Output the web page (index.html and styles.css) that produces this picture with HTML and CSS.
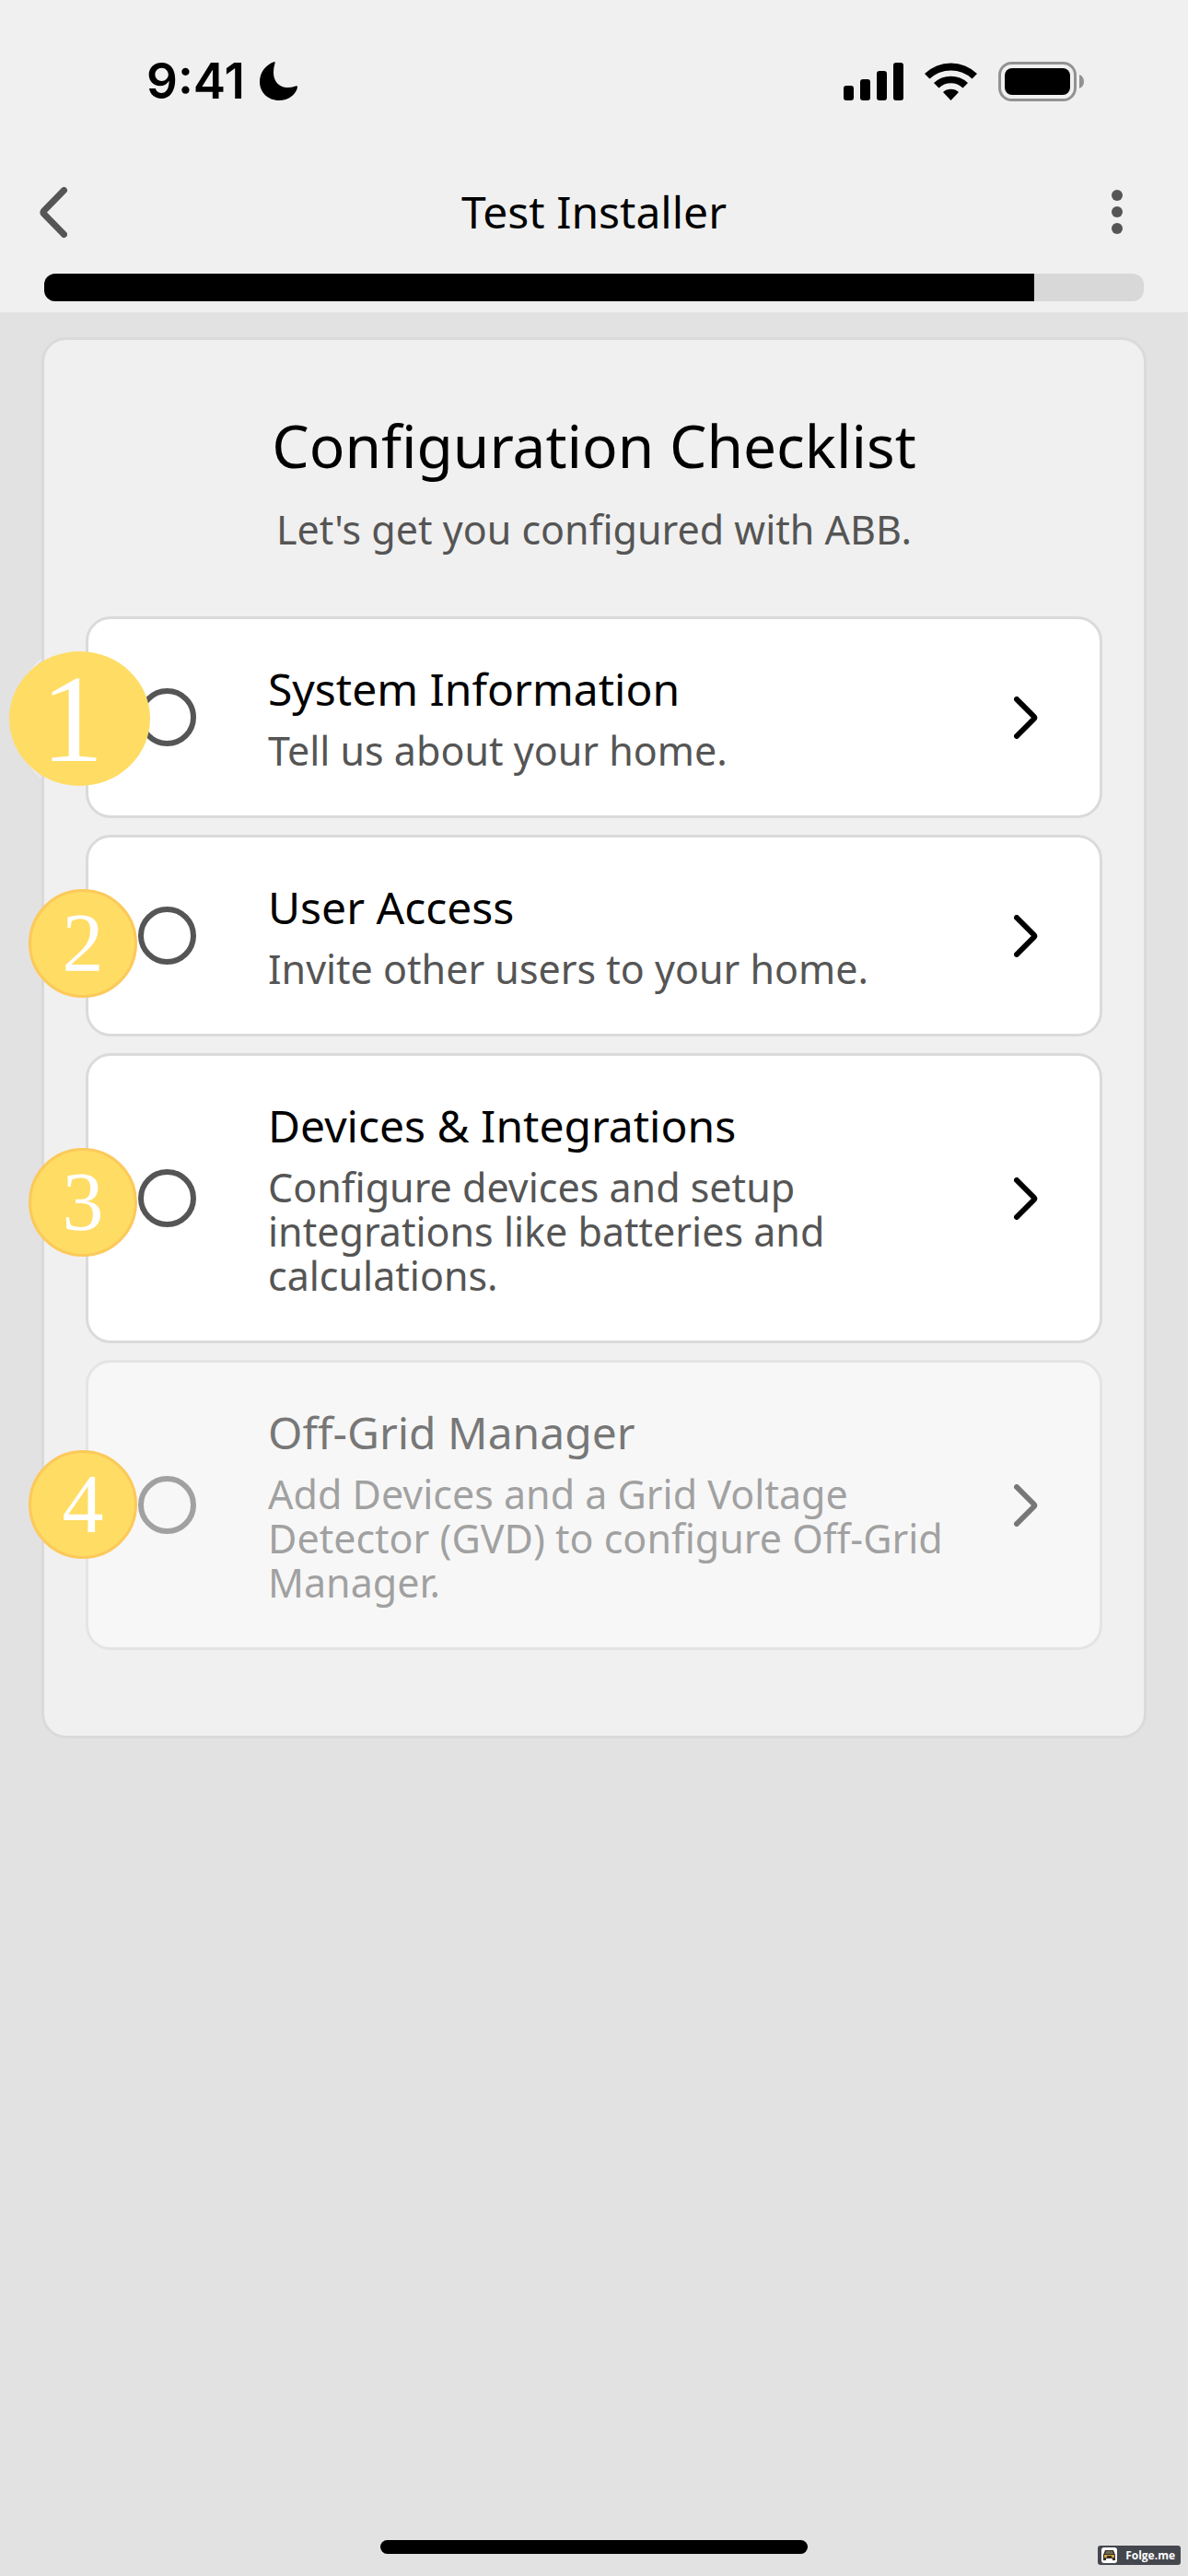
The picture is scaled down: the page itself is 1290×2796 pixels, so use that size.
FILE: index.html
```html
<!DOCTYPE html>
<html lang="en">
<head>
    <meta charset="UTF-8">
    <meta name="viewport" content="width=device-width, initial-scale=1.0">
    <title>Test Installer</title>
    <link rel="stylesheet" href="styles.css">
</head>
<body>
    <header class="header">
        <div class="status-bar">
            <div class="status-left">
                <span class="time">9:41</span>
                <svg width="41" height="42" viewBox="0 0 41 42"><path d="M16 0C7 3 0 11 0 22c0 11 9 20 21 20 10 0 18-6 20-14 0-2-1-2-2-1.500-3 1-6 1.500-9 1.500-9 0-15-7-15-16 0-4 .5-7 1.500-10Q17 0 16 0z"/></svg>
            </div>
            <div class="status-right">
                <svg width="65" height="41" viewBox="0 0 65 41">
                    <rect x="0" y="25" width="11" height="16" rx="3"/>
                    <rect x="18" y="18" width="11" height="23" rx="3"/>
                    <rect x="36" y="9" width="11" height="32" rx="3"/>
                    <rect x="54" y="0" width="11" height="41" rx="3"/>
                </svg>
                <svg width="57" height="42" viewBox="0 0 57 42">
                    <path d="M0 13a41 41 0 0 1 57 0l-5.500 5.500a34 34 0 0 0-46 0z"/>
                    <path d="M10 23a27 27 0 0 1 37 0l-5.500 5.500a19 19 0 0 0-26 0z"/>
                    <path d="M20 33a13 13 0 0 1 17 0l-8.500 9z"/>
                </svg>
                <svg width="93" height="43" viewBox="0 0 93 43">
                    <rect x="1.500" y="1.500" width="82" height="40" rx="13" fill="none" stroke="#929292" stroke-width="3"/>
                    <rect x="7" y="7" width="71" height="29" rx="8"/>
                    <path d="M88 14q5 2 5 7.500t-5 7.500z" fill="#929292"/>
                </svg>
            </div>
        </div>
        <nav class="navbar">
            <button class="icon-btn" aria-label="Back">
                <svg width="30" height="55" viewBox="0 0 30 55"><path d="M26.500 3.500L5 25.500q-2 2 0 4L26.500 51.500" fill="none" stroke="#555" stroke-width="7" stroke-linecap="round"/></svg>
            </button>
            <h1 class="nav-title">Test Installer</h1>
            <button class="icon-btn menu-btn" aria-label="More options">
                <svg width="12" height="48" viewBox="0 0 12 48" fill="#555"><circle cx="6" cy="6" r="6"/><circle cx="6" cy="24" r="6"/><circle cx="6" cy="42" r="6"/></svg>
            </button>
        </nav>
        <div class="progress" role="progressbar" aria-label="Setup progress" aria-valuenow="90" aria-valuemin="0" aria-valuemax="100">
            <div class="progress-fill" style="width: 90%"></div>
        </div>
    </header>

    <main class="card">
        <h2 class="card-title">Configuration Checklist</h2>
        <p class="card-text">Let's get you configured with ABB.</p>
        <ul class="checklist">
            <li>
                <button class="item">
                    <span class="circle"></span>
                    <span class="item-body">
                        <span class="item-title">System Information</span>
                        <span class="item-text">Tell us about your home.</span>
                    </span>
                    <svg class="chevron" width="26" height="46" viewBox="0 0 26 46"><path d="M3 3L21.500 21.500q1.500 1.500 0 3L3 43"/></svg>
                </button>
                <span class="marker marker-1">1</span>
            </li>
            <li>
                <button class="item">
                    <span class="circle"></span>
                    <span class="item-body">
                        <span class="item-title">User Access</span>
                        <span class="item-text">Invite other users to your home.</span>
                    </span>
                    <svg class="chevron" width="26" height="46" viewBox="0 0 26 46"><path d="M3 3L21.500 21.500q1.500 1.500 0 3L3 43"/></svg>
                </button>
                <span class="marker marker-2">2</span>
            </li>
            <li>
                <button class="item">
                    <span class="circle"></span>
                    <span class="item-body">
                        <span class="item-title">Devices &amp; Integrations</span>
                        <span class="item-text">Configure devices and setup integrations like batteries and calculations.</span>
                    </span>
                    <svg class="chevron" width="26" height="46" viewBox="0 0 26 46"><path d="M3 3L21.500 21.500q1.500 1.500 0 3L3 43"/></svg>
                </button>
                <span class="marker marker-3">3</span>
            </li>
            <li>
                <button class="item" disabled>
                    <span class="circle"></span>
                    <span class="item-body">
                        <span class="item-title">Off-Grid Manager</span>
                        <span class="item-text">Add Devices and a Grid Voltage Detector (GVD) to configure Off-Grid Manager.</span>
                    </span>
                    <svg class="chevron" width="26" height="46" viewBox="0 0 26 46"><path d="M3 3L21.500 21.500q1.500 1.500 0 3L3 43"/></svg>
                </button>
                <span class="marker marker-4">4</span>
            </li>
        </ul>
    </main>

    <footer class="footer">
        <div class="home-bar"></div>
        <div class="folge">
            <svg width="17" height="17" viewBox="0 0 17 17">
                <rect width="17" height="17" rx="3" fill="#fff"/>
                <path d="M4 3h9l2 5v6h-3v-2H5v2H2V8z" fill="#3b3122"/>
                <path d="M3 8h11v3H3z" fill="#c9a345"/>
                <path d="M5 4h7l1 3H4z" fill="#6d6758"/>
                <path d="M6 9h5v2H6z" fill="#3b3122"/>
            </svg>
            <span>Folge.me</span>
        </div>
    </footer>
</body>
</html>
```
FILE: styles.css
```css
* {
    box-sizing: border-box;
}
body {
    margin: 0;
    min-height: 100vh;
    display: flex;
    flex-direction: column;
    background-color: #e2e2e2;
    color: #000;
    font-family: "Noto Sans", sans-serif;
}
h1, h2, p, ul {
    margin: 0;
    padding: 0;
    font-weight: 400;
}
svg {
    display: block;
    flex-shrink: 0;
}
button {
    border: none;
    background: none;
    padding: 0;
    color: inherit;
    font-family: inherit;
    cursor: pointer;
}

/* header */
.header {
    background-color: #f0f0f0;
    padding: 58px 48px 12px;
}
.status-bar {
    display: flex;
    justify-content: space-between;
    align-items: center;
    height: 60px;
    padding: 0 65px 0 111px;
}
.status-left {
    display: flex;
    align-items: center;
    gap: 16px;
}
.status-right {
    display: flex;
    align-items: center;
    gap: 23px;
}
.time {
    font-family: Inter, sans-serif;
    font-size: 53px;
    font-weight: 600;
    line-height: 60px;
}
.navbar {
    display: flex;
    justify-content: space-between;
    align-items: center;
    height: 116px;
    margin: 54px -5px 9px;
}
.nav-title {
    font-size: 48px;
    line-height: 60px;
}
.icon-btn {
    width: 68px;
    height: 60px;
    display: flex;
    align-items: center;
}
.menu-btn {
    justify-content: center;
}
.progress {
    height: 30px;
    border-radius: 12px;
    background-color: #d8d8d8;
    overflow: hidden;
}
.progress-fill {
    height: 100%;
    background-color: #000;
}

/* checklist card */
.card {
    margin: 27px 45px;
    padding: 75px 45px 93px;
    border: 3px solid #dadada;
    border-radius: 27px;
    background-color: #f0f0f0;
}
.card-title {
    font-size: 64px;
    line-height: 80px;
    text-align: center;
}
.card-text {
    margin-top: 27px;
    font-size: 43px;
    line-height: 48px;
    text-align: center;
    color: #555;
}
.checklist {
    display: flex;
    flex-direction: column;
    gap: 18px;
    margin-top: 70px;
    list-style: none;
}
.checklist li {
    position: relative;
}
.item {
    display: flex;
    align-items: center;
    width: 100%;
    padding: 46px 67px 46px 54px;
    border: 3px solid #dadada;
    border-radius: 27px;
    background-color: #fff;
    text-align: left;
}
.item:disabled {
    opacity: 0.5;
    cursor: default;
}
.circle {
    flex-shrink: 0;
    width: 63px;
    height: 63px;
    border: 6px solid #555;
    border-radius: 50%;
}
.item-body {
    flex: 1;
    display: flex;
    flex-direction: column;
    gap: 13px;
    padding: 0 48px 0 78px;
}
.item-title {
    font-size: 48px;
    line-height: 60px;
}
.item-text {
    font-size: 43px;
    line-height: 48px;
    color: #555;
}
.chevron path {
    fill: none;
    stroke: #000;
    stroke-width: 6px;
    stroke-linecap: round;
}

/* numbered markers over the items */
.marker {
    position: absolute;
    left: -62px;
    display: flex;
    justify-content: center;
    align-items: center;
    width: 118px;
    height: 118px;
    border: 3px solid #fcc95a;
    border-radius: 50%;
    background-color: #ffdc64;
    color: #fff;
    font-family: "Liberation Serif", serif;
    font-size: 90px;
    line-height: 1;
}
.marker-1 {
    top: 38px;
    left: -83px;
    width: 153px;
    height: 146px;
    border: none;
    font-size: 136px;
    padding-right: 16px;
}
.marker-1::before {
    content: "";
    position: absolute;
    inset: -14px -30px -14px 5px;
    border: 1px solid rgba(255, 255, 255, 0.6);
    border-radius: 50%;
    z-index: -1;
}
.marker-2 {
    top: 59px;
}
.marker-3 {
    top: 103px;
}
.marker-4 {
    top: 98px;
}

/* footer */
.footer {
    position: relative;
    display: flex;
    justify-content: center;
    margin-top: auto;
    padding-bottom: 24px;
}
.home-bar {
    width: 36%;
    height: 15px;
    border-radius: 8px;
    background-color: #000;
}
.folge {
    position: absolute;
    right: 8px;
    bottom: 12px;
    display: flex;
    align-items: center;
    justify-content: space-between;
    width: 90px;
    height: 21px;
    padding: 0 6px 0 4px;
    border-radius: 3px;
    background-color: #45474f;
    color: #fff;
    font-family: "Open Sans", sans-serif;
    font-size: 12px;
    font-weight: 700;
    line-height: 20px;
}
```
